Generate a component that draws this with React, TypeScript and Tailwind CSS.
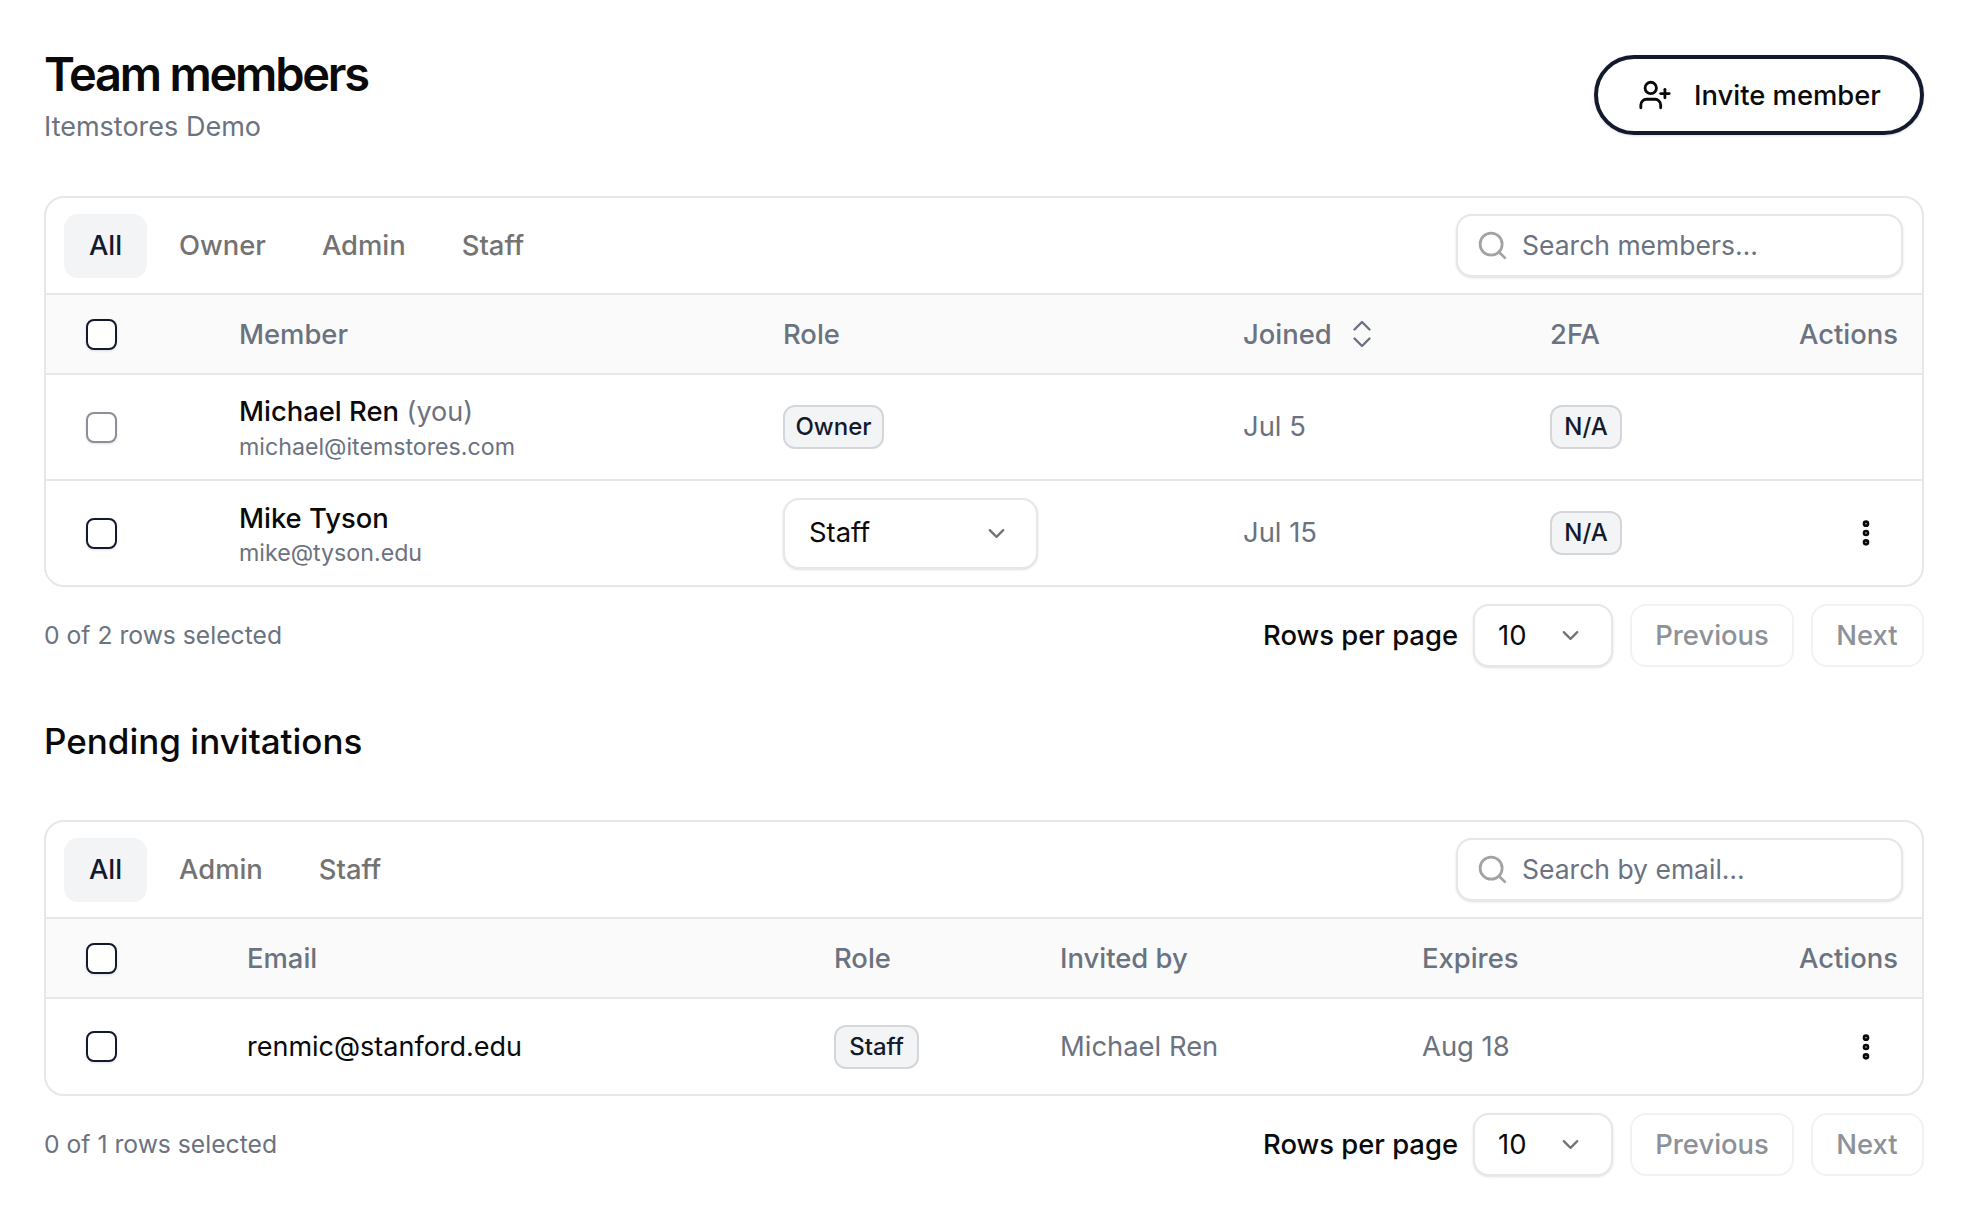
import React from "react";
import { ChevronDown, ChevronsUpDown, EllipsisVertical, Search, UserPlus } from "lucide-react";

function Check({ muted }: { muted?: boolean }) {
  return (
    <span
      className={`block w-[31px] h-[31px] rounded-[8px] border-[2px] bg-white shadow-sm ${
        muted ? "border-[#8b8f97]" : "border-[#141a2e]"
      }`}
    />
  );
}

function Badge({ width, children }: { width: string; children: React.ReactNode }) {
  return (
    <span className={`inline-flex items-center justify-center h-[44px] ${width} rounded-[12px] border-[2px] border-[#d4d6da] bg-[#f3f4f6] text-[24px] font-medium text-[#141a2e]`}>
      {children}
    </span>
  );
}

function Toolbar({ tabs, placeholder }: { tabs: string[]; placeholder: string }) {
  return (
    <div className="flex items-center justify-between h-[97px] pl-[18px] pr-[19px] border-b-[2px] border-[#e5e7eb]">
      <div className="flex items-center gap-[8px]">
        {tabs.map((tab, i) => (
          <button
            key={tab}
            className={`h-[64px] min-w-[83px] px-[24px] rounded-[14px] text-[27.4px] font-medium ${
              i === 0 ? "bg-[#f3f4f6] text-[#141a2e]" : "text-[#737373]"
            }`}
          >
            {tab}
          </button>
        ))}
      </div>
      <div className="flex items-center w-[447px] h-[63px] pl-[18px] gap-[13px] rounded-[16px] border-[2px] border-[#e5e7eb] bg-white shadow-sm">
        <Search size={33} strokeWidth={2} className="text-[#a3a3a3]" />
        <span className="text-[26.5px] text-[#6b7280]">{placeholder}</span>
      </div>
    </div>
  );
}

function Footer({ count }: { count: string }) {
  return (
    <div className="flex items-center justify-between h-[63px] mt-[17px]">
      <span className="text-[24.7px] text-[#6b7280]">{count}</span>
      <div className="flex items-center">
        <span className="text-[27.4px] font-medium text-[#0a0a0a] mr-[15px]">Rows per page</span>
        <div className="flex items-center justify-between w-[140px] h-[63px] pl-[23px] pr-[27px] rounded-[16px] border-[2px] border-[#e5e7eb] bg-white shadow-sm text-[27.4px] text-[#0a0a0a]">
          10
          <ChevronDown size={27} className="text-[#737373]" />
        </div>
        <button className="h-[63px] w-[164px] ml-[17px] rounded-[16px] border-[2px] border-[#f1f2f4] text-[27.4px] font-medium text-[#8d9199]">
          Previous
        </button>
        <button className="h-[63px] w-[113px] ml-[17px] pr-[1px] rounded-[16px] border-[2px] border-[#f1f2f4] text-[27.4px] font-medium text-[#8d9199]">
          Next
        </button>
      </div>
    </div>
  );
}

const memberCols = "grid grid-cols-[193px_544px_460px_307px_1fr_auto] items-center";
const inviteCols = "grid grid-cols-[201px_587px_226px_362px_1fr_auto] items-center";
const headText = "text-[27.4px] font-medium text-[#6b7280] pt-[1px]";

function Kebab() {
  return (
    <div className="flex justify-end pr-[40px]">
      <EllipsisVertical size={32} strokeWidth={3} className="text-[#0a0a0a]" />
    </div>
  );
}

function Person({ name, you, email }: { name: string; you?: boolean; email: string }) {
  return (
    <div className="flex flex-col pt-[3px]">
      <span className="text-[27.4px] leading-[36px] font-medium text-[#0a0a0a]">
        {name}
        {you && <span className="font-normal text-[#6b7280] text-[27px]"> (you)</span>}
      </span>
      <span className="text-[23.2px] leading-[34px] text-[#6b7280]">{email}</span>
    </div>
  );
}

export default function App() {
  return (
    <div className="min-h-[1216px] bg-white pl-[44px] pr-[42px] pt-[55px] [font-family:Inter,sans-serif]">
      {/* Header */}
      <div className="flex items-start justify-between h-[141px]">
        <div className="-mt-[4px]">
          <h1 className="text-[47px] leading-[46px] font-semibold tracking-[-0.048em] text-[#0a0a0a]">Team members</h1>
          <p className="mt-[12px] text-[27px] leading-[36px] text-[#6b7280]">Itemstores Demo</p>
        </div>
        <button className="flex items-center gap-[22px] h-[80px] w-[330px] pl-[40px] rounded-full border-[4px] border-[#141a2e] bg-white text-[27.4px] font-medium text-[#0a0a0a] shadow-sm">
          <UserPlus size={34} strokeWidth={2} />
          <span className="pt-[2px]">Invite member</span>
        </button>
      </div>

      {/* Members */}
      <div className="rounded-[20px] border-[2px] border-[#e5e7eb] overflow-hidden">
        <Toolbar tabs={["All", "Owner", "Admin", "Staff"]} placeholder="Search members…" />
        <div className={`${memberCols} h-[80px] bg-[#fafafb] border-b-[2px] border-[#e5e7eb]`}>
          <div className="pl-[40px]"><Check /></div>
          <span className={headText}>Member</span>
          <span className={headText}>Role</span>
          <span className={`${headText} flex items-center gap-[12px]`}>
            Joined
            <ChevronsUpDown size={36} strokeWidth={1.6} />
          </span>
          <span className={headText}>2FA</span>
          <span className={`${headText} text-right pr-[24px]`}>Actions</span>
        </div>
        <div className={`${memberCols} h-[106px] border-b-[2px] border-[#e5e7eb]`}>
          <div className="pl-[40px]"><Check muted /></div>
          <Person name="Michael Ren" you email="michael@itemstores.com" />
          <div><Badge width="w-[101px]">Owner</Badge></div>
          <span className="text-[27.4px] text-[#6b7280]">Jul 5</span>
          <div><Badge width="w-[72px]">N/A</Badge></div>
          <div />
        </div>
        <div className={`${memberCols} h-[104px]`}>
          <div className="pl-[40px]"><Check /></div>
          <Person name="Mike Tyson" email="mike@tyson.edu" />
          <div>
            <div className="flex items-center justify-between w-[255px] h-[71px] pl-[24px] pr-[26px] rounded-[16px] border-[2px] border-[#e5e7eb] bg-white shadow-sm text-[27.4px] text-[#0a0a0a]">
              Staff
              <ChevronDown size={27} className="text-[#737373]" />
            </div>
          </div>
          <span className="text-[27.4px] text-[#6b7280]">Jul 15</span>
          <div><Badge width="w-[72px]">N/A</Badge></div>
          <Kebab />
        </div>
      </div>
      <Footer count="0 of 2 rows selected" />

      <h2 className="mt-[51px] h-[102px] text-[35px] leading-[46px] font-medium text-[#0a0a0a]">Pending invitations</h2>

      {/* Invitations */}
      <div className="rounded-[20px] border-[2px] border-[#e5e7eb] overflow-hidden">
        <Toolbar tabs={["All", "Admin", "Staff"]} placeholder="Search by email…" />
        <div className={`${inviteCols} h-[80px] bg-[#fafafb] border-b-[2px] border-[#e5e7eb]`}>
          <div className="pl-[40px]"><Check /></div>
          <span className={headText}>Email</span>
          <span className={headText}>Role</span>
          <span className={headText}>Invited by</span>
          <span className={headText}>Expires</span>
          <span className={`${headText} text-right pr-[24px]`}>Actions</span>
        </div>
        <div className={`${inviteCols} h-[95px]`}>
          <div className="pl-[40px]"><Check /></div>
          <span className="text-[27px] pt-[2px] text-[#0a0a0a]">renmic@stanford.edu</span>
          <div><Badge width="w-[85px]">Staff</Badge></div>
          <span className="text-[27.4px] text-[#6b7280]">Michael Ren</span>
          <span className="text-[27.4px] text-[#6b7280]">Aug 18</span>
          <Kebab />
        </div>
      </div>
      <Footer count="0 of 1 rows selected" />
    </div>
  );
}
